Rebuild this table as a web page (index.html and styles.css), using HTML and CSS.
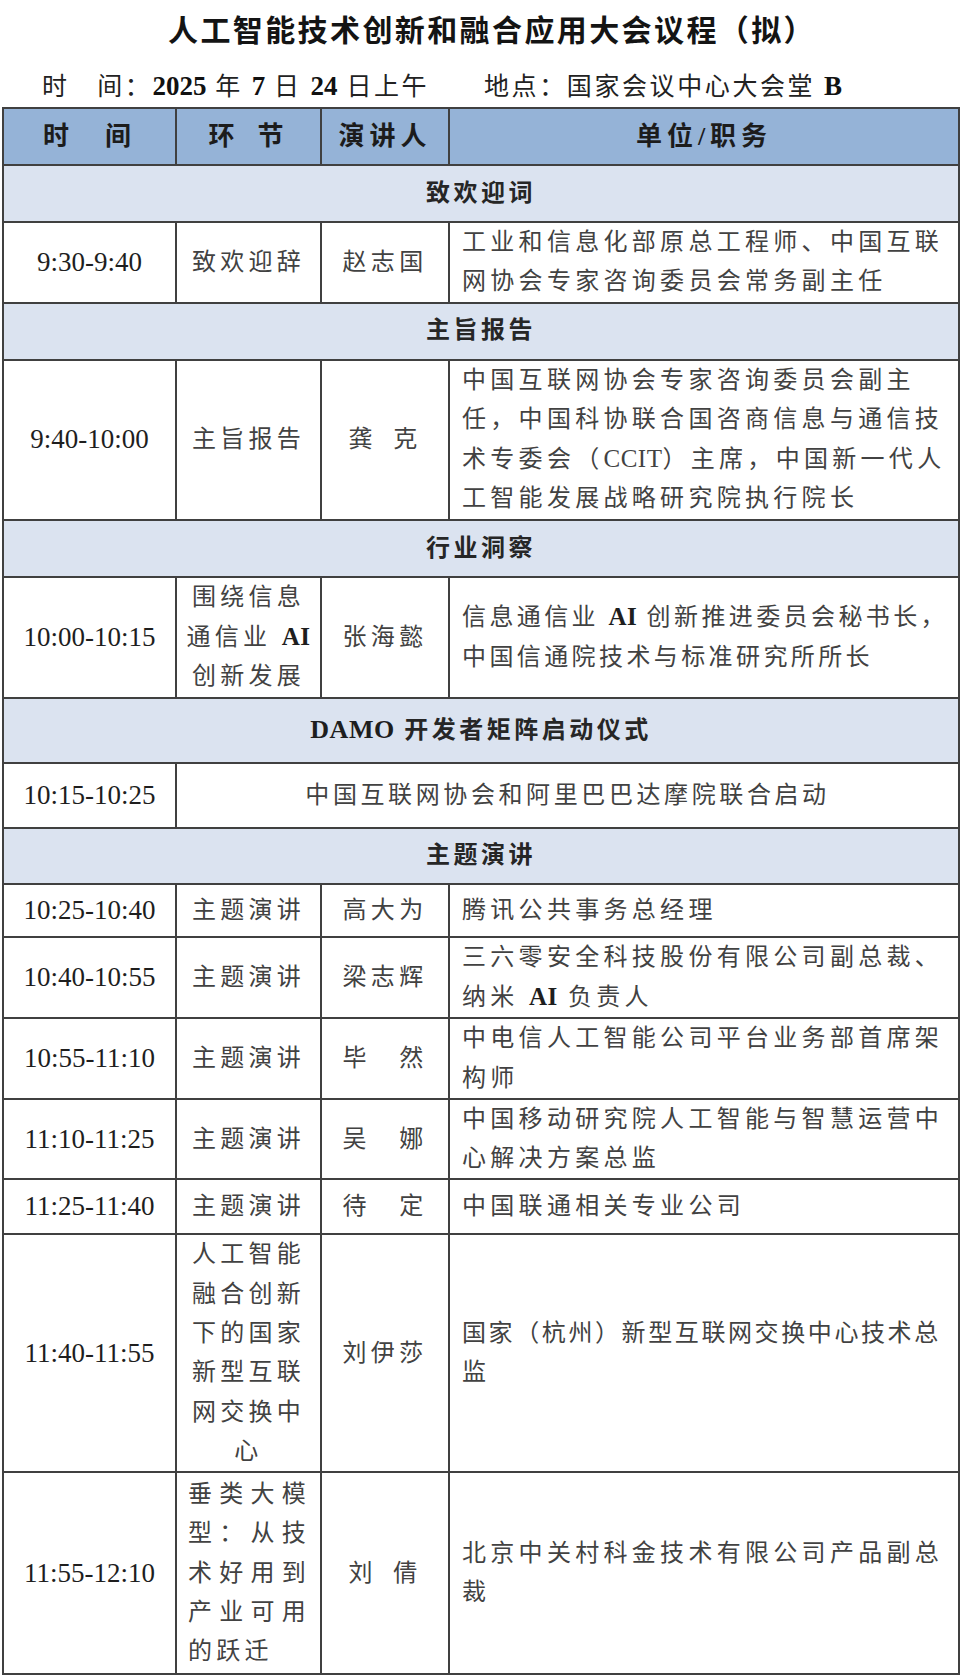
FILE: index.html
```html
<!DOCTYPE html>
<html lang="zh-CN">
<head>
<meta charset="utf-8">
<title>人工智能技术创新和融合应用大会议程（拟）</title>
<link rel="stylesheet" href="styles.css">
</head>
<body>
<h1 class="title">人工智能技术创新和融合应用大会议程（拟）</h1>
<div class="meta">
  <span class="when">时　间：<b class="en">2025</b> 年 <b class="en">7</b> 日 <b class="en">24</b> 日上午</span>
  <span class="where">地点：国家会议中心大会堂 <b class="en">B</b></span>
</div>
<table class="agenda">
  <colgroup><col class="c1"><col class="c2"><col class="c3"><col class="c4"></colgroup>
  <thead>
    <tr class="hd"><th>时　间</th><th>环&ensp;节</th><th>演讲人</th><th>单位/职务</th></tr>
  </thead>
  <tbody>
    <tr class="sec"><td colspan="4">致欢迎词</td></tr>
    <tr><td class="time">9:30-9:40</td><td class="part">致欢迎辞</td><td class="who">赵志国</td><td class="org">工业和信息化部原总工程师、中国互联<br>网协会专家咨询委员会常务副主任</td></tr>
    <tr class="sec"><td colspan="4">主旨报告</td></tr>
    <tr class="h160"><td class="time">9:40-10:00</td><td class="part">主旨报告</td><td class="who">龚&ensp;克</td><td class="org">中国互联网协会专家咨询委员会副主<br>任，中国科协联合国咨商信息与通信技<br>术专委会（<span class="en">CCIT</span>）主席，中国新一代人<br>工智能发展战略研究院执行院长</td></tr>
    <tr class="sec"><td colspan="4">行业洞察</td></tr>
    <tr><td class="time">10:00-10:15</td><td class="part">围绕信息<br>通信业 <b class="en">AI</b><br>创新发展</td><td class="who">张海懿</td><td class="org tight">信息通信业 <b class="en">AI</b> 创新推进委员会秘书长，<br>中国信通院技术与标准研究所所长</td></tr>
    <tr class="sec h65"><td colspan="4"><b class="en">DAMO</b> 开发者矩阵启动仪式</td></tr>
    <tr class="h65"><td class="time">10:15-10:25</td><td class="joint" colspan="3">中国互联网协会和阿里巴巴达摩院联合启动</td></tr>
    <tr class="sec h56"><td colspan="4">主题演讲</td></tr>
    <tr class="h53"><td class="time">10:25-10:40</td><td class="part">主题演讲</td><td class="who">高大为</td><td class="org">腾讯公共事务总经理</td></tr>
    <tr><td class="time">10:40-10:55</td><td class="part">主题演讲</td><td class="who">梁志辉</td><td class="org">三六零安全科技股份有限公司副总裁、<br>纳米 <b class="en">AI</b> 负责人</td></tr>
    <tr><td class="time">10:55-11:10</td><td class="part">主题演讲</td><td class="who">毕　然</td><td class="org">中电信人工智能公司平台业务部首席架<br>构师</td></tr>
    <tr><td class="time">11:10-11:25</td><td class="part">主题演讲</td><td class="who">吴　娜</td><td class="org">中国移动研究院人工智能与智慧运营中<br>心解决方案总监</td></tr>
    <tr class="h55"><td class="time">11:25-11:40</td><td class="part">主题演讲</td><td class="who">待　定</td><td class="org">中国联通相关专业公司</td></tr>
    <tr><td class="time">11:40-11:55</td><td class="part">人工智能<br>融合创新<br>下的国家<br>新型互联<br>网交换中<br>心</td><td class="who">刘伊莎</td><td class="org paren">国家（杭州）新型互联网交换中心技术总<br>监</td></tr>
    <tr class="h202"><td class="time">11:55-12:10</td><td class="part just">垂类大模型：从技术好用到产业可用的跃迁</td><td class="who">刘&ensp;倩</td><td class="org">北京中关村科金技术有限公司产品副总<br>裁</td></tr>
  </tbody>
</table>
</body>
</html>
```
FILE: styles.css
```css
html, body {
  margin: 0;
  padding: 0;
  background: #ffffff;
}

body {
  width: 960px;
  color: #333;
  font-family: "Liberation Serif", "Noto Sans CJK SC", serif;
}

.title {
  margin: 0;
  height: 56px;
  line-height: 56px;
  padding-left: 24px;
  text-align: center;
  font-family: "Noto Sans CJK SC", sans-serif;
  font-weight: 700;
  font-size: 30px;
  letter-spacing: 2.4px;
  color: #141414;
}

.meta {
  margin-top: 9px;
  height: 42px;
  line-height: 42px;
  padding-left: 42px;
  display: grid;
  grid-template-columns: 442px auto;
  font-size: 25px;
  letter-spacing: 2.6px;
  color: #222;
  white-space: nowrap;
}

.meta .en {
  font-family: "Liberation Serif", serif;
  font-weight: 700;
  font-size: 27px;
  letter-spacing: 0;
  color: #111;
}

.agenda {
  margin-left: 2px;
  width: 956px;
  table-layout: fixed;
  border-collapse: collapse;
}

.c1 { width: 173px; }
.c2 { width: 145px; }
.c3 { width: 128px; }
.c4 { width: 510px; }

.agenda th,
.agenda td {
  border: 2px solid #404040;
  padding: 0;
  vertical-align: middle;
  text-align: center;
  font-size: 24px;
  letter-spacing: 4.3px;
  line-height: 39.3px;
  color: #424242;
  white-space: nowrap;
}

.hd { height: 57px; }
.hd th {
  background: #95b3d7;
  font-weight: 700;
  font-size: 26px;
  letter-spacing: 5px;
  color: #1c1c1c;
}

.sec { height: 57px; }
.sec td {
  background: #dbe3f0;
  font-weight: 700;
  letter-spacing: 3.5px;
  color: #262626;
}

.h53 { height: 53px; }
.h55 { height: 55px; }
.h56 { height: 56px; }
.h65 { height: 65px; }
.h160 { height: 160px; }
.h202 { height: 202px; }

.agenda td.time {
  font-size: 27px;
  letter-spacing: 0;
  color: #1e1e1e;
}

.agenda td.part {
  padding: 0 4px;
}

.agenda td.part.just {
  white-space: normal;
  padding: 0 10px 0 11px;
  text-align: justify;
  text-align-last: left;
}

.agenda td.org {
  text-align: left;
  padding: 0 6px 0 12px;
}

.agenda td.org.tight { letter-spacing: 3.4px; }
.agenda td.org.paren { letter-spacing: 2.6px; }

.agenda td.joint {
  letter-spacing: 3.6px;
}

.agenda .en {
  font-family: "Liberation Serif", serif;
  letter-spacing: 0.5px;
  font-size: 25px;
}

.agenda b.en {
  font-weight: 700;
  color: #1e1e1e;
}

.sec .en {
  font-size: 26px;
}
```
